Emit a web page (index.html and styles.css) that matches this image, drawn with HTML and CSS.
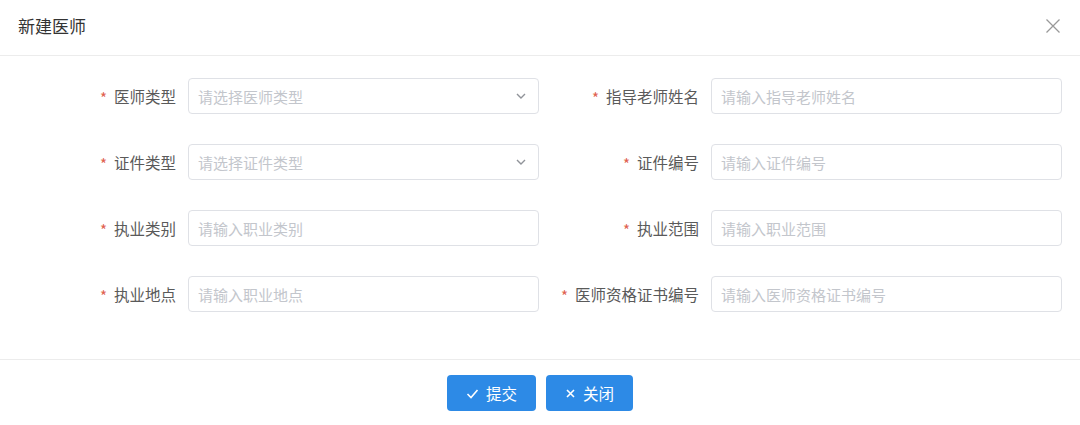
FILE: index.html
```html
<!DOCTYPE html>
<html lang="zh-CN">
<head>
    <meta charset="UTF-8">
    <meta name="viewport" content="width=device-width, initial-scale=1.0">
    <title>新建医师</title>
    <link rel="stylesheet" href="styles.css">
</head>
<body>
    <div class="dialog">
        <header class="dialog-header">
            <span class="dialog-title">新建医师</span>
            <button class="dialog-close" type="button" aria-label="关闭">
                <svg width="16" height="16" viewBox="0 0 16 16"><path d="M1.5 1.5 L14.5 14.5 M14.5 1.5 L1.5 14.5" stroke="#999" stroke-width="1.3" fill="none"/></svg>
            </button>
        </header>

        <form class="dialog-body">
            <div class="form-item">
                <label class="form-label"><span class="req">*</span>医师类型</label>
                <div class="select">
                    <input type="text" placeholder="请选择医师类型" readonly>
                    <svg class="arrow" width="12" height="12" viewBox="0 0 12 12"><path d="M2 4 L6 8 L10 4" stroke="#909399" stroke-width="1.4" fill="none"/></svg>
                </div>
            </div>
            <div class="form-item">
                <label class="form-label"><span class="req">*</span>指导老师姓名</label>
                <input type="text" placeholder="请输入指导老师姓名">
            </div>

            <div class="form-item">
                <label class="form-label"><span class="req">*</span>证件类型</label>
                <div class="select">
                    <input type="text" placeholder="请选择证件类型" readonly>
                    <svg class="arrow" width="12" height="12" viewBox="0 0 12 12"><path d="M2 4 L6 8 L10 4" stroke="#909399" stroke-width="1.4" fill="none"/></svg>
                </div>
            </div>
            <div class="form-item">
                <label class="form-label"><span class="req">*</span>证件编号</label>
                <input type="text" placeholder="请输入证件编号">
            </div>

            <div class="form-item">
                <label class="form-label"><span class="req">*</span>执业类别</label>
                <input type="text" placeholder="请输入职业类别">
            </div>
            <div class="form-item">
                <label class="form-label"><span class="req">*</span>执业范围</label>
                <input type="text" placeholder="请输入职业范围">
            </div>

            <div class="form-item">
                <label class="form-label"><span class="req">*</span>执业地点</label>
                <input type="text" placeholder="请输入职业地点">
            </div>
            <div class="form-item">
                <label class="form-label"><span class="req">*</span>医师资格证书编号</label>
                <input type="text" placeholder="请输入医师资格证书编号">
            </div>
        </form>

        <footer class="dialog-footer">
            <button type="button" class="btn">
                <svg width="13" height="13" viewBox="0 0 13 13"><path d="M1.5 7 L5 10.5 L11.5 3" stroke="#fff" stroke-width="1.6" fill="none"/></svg>
                提交
            </button>
            <button type="button" class="btn">
                <svg width="11" height="11" viewBox="0 0 11 11"><path d="M2 2 L9 9 M9 2 L2 9" stroke="#fff" stroke-width="1.6" fill="none"/></svg>
                关闭
            </button>
        </footer>
    </div>
</body>
</html>
```

FILE: styles.css
```css
body {
    margin: 0;
    padding: 0;
    background: #fff;
    font-family: "Noto Sans CJK SC", "Liberation Sans", sans-serif;
    color: #555;
}

.dialog {
    width: 1080px;
    height: 425px;
    background: #fff;
    display: flex;
    flex-direction: column;
}

.dialog-header {
    height: 56px;
    box-sizing: border-box;
    border-bottom: 1px solid #ececec;
    display: flex;
    align-items: center;
    justify-content: space-between;
    padding: 0 18px;
}

.dialog-title {
    font-size: 17px;
    color: #333;
    margin-top: -4px;
}

.dialog-close {
    border: none;
    background: none;
    padding: 0;
    width: 16px;
    height: 16px;
    margin-right: 1px;
    margin-top: -4px;
    cursor: pointer;
}

.dialog-body {
    display: grid;
    grid-template-columns: 1fr 1fr;
    row-gap: 30px;
    padding: 22px 18px 0 16px;
    height: 304px;
    box-sizing: border-box;
    border-bottom: 1px solid #ececec;
    align-content: start;
}

.form-item {
    display: flex;
    align-items: center;
    height: 36px;
}

.form-label {
    width: 172px;
    flex: none;
    box-sizing: border-box;
    padding-right: 12px;
    text-align: right;
    font-size: 15.5px;
    color: #5a5a5a;
}

.req {
    color: #e0604f;
    font-size: 15px;
    margin-right: 7px;
    position: relative;
    top: 1px;
}

.form-item input {
    flex: 1;
    min-width: 0;
    height: 36px;
    box-sizing: border-box;
    border: 1px solid #dfe1e6;
    border-radius: 4px;
    padding: 0 9px;
    font-family: inherit;
    font-size: 15px;
    color: #555;
    background: #fff;
    outline: none;
}

.form-item input::placeholder {
    color: #c3c6cc;
}

.select {
    flex: 1;
    display: flex;
    position: relative;
}

.select .arrow {
    position: absolute;
    right: 12px;
    top: 12px;
}

.dialog-footer {
    flex: 1;
    display: flex;
    justify-content: center;
    align-items: flex-start;
    gap: 10px;
    padding-top: 15px;
}

.btn {
    display: inline-flex;
    align-items: center;
    justify-content: center;
    gap: 7px;
    height: 36px;
    padding: 0 19px;
    border: none;
    border-radius: 4px;
    background: #2d8ae6;
    color: #fff;
    font-family: inherit;
    font-size: 15.5px;
    cursor: pointer;
}

.btn:hover {
    background: #4a9cec;
}
```
